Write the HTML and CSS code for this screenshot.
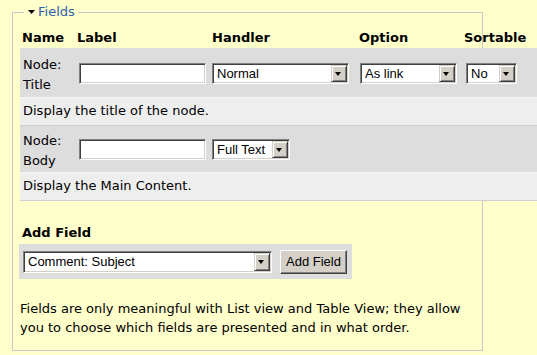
FILE: index.html
```html
<!DOCTYPE html>
<html lang="en">
<head>
<meta charset="utf-8">
<title>Fields</title>
<link rel="stylesheet" href="styles.css">
</head>
<body>
<fieldset class="fields">
  <legend class="legend"><svg class="caret" width="7" height="4" viewBox="0 0 7 4"><polygon points="0,0 7,0 3.5,4" fill="#000"/></svg><a href="#" class="legend-link">Fields</a></legend>
  <table class="field-table">
    <colgroup>
      <col class="c-name"><col class="c-label"><col class="c-handler"><col class="c-option"><col class="c-sort">
    </colgroup>
    <thead>
      <tr class="head">
        <th>Name</th><th>Label</th><th>Handler</th><th>Option</th><th>Sortable</th>
      </tr>
    </thead>
    <tbody>
      <tr class="field first">
        <td class="name">Node:<br>Title</td>
        <td class="ctl"><input type="text" class="text-input"></td>
        <td class="ctl"><span class="sel s-handler"><select><option>Normal</option></select><span class="btn"></span></span></td>
        <td class="ctl"><span class="sel s-option"><select><option>As link</option></select><span class="btn"></span></span></td>
        <td class="ctl"><span class="sel s-sort"><select><option>No</option></select><span class="btn"></span></span></td>
      </tr>
      <tr class="desc">
        <td colspan="5">Display the title of the node.</td>
      </tr>
      <tr class="field">
        <td class="name">Node:<br>Body</td>
        <td class="ctl"><input type="text" class="text-input"></td>
        <td class="ctl" colspan="3"><span class="sel s-full"><select><option>Full Text</option></select><span class="btn"></span></span></td>
      </tr>
      <tr class="desc">
        <td colspan="5">Display the Main Content.</td>
      </tr>
    </tbody>
  </table>

  <h3 class="add-title">Add Field</h3>
  <div class="add-box">
    <span class="sel s-comment"><select><option>Comment: Subject</option></select><span class="btn"></span></span>
    <button type="button" class="push">Add Field</button>
  </div>

  <p class="help">Fields are only meaningful with List view and Table View; they allow you to choose which fields are presented and in what order.</p>
</fieldset>
</body>
</html>
```

FILE: styles.css
```css
html { overflow: hidden; }
body {
  margin: 0;
  background: #ffffcc;
  font-family: "DejaVu Sans", Verdana, sans-serif;
  font-size: 13px;
  color: #000;
}
.fields {
  box-sizing: border-box;
  width: 471px;
  margin: 4px 0 0 12px;
  padding: 8px 7px 13px 7px;
  border: 1px solid #c8c8c8;
  min-width: 0;
}
.legend {
  margin-left: 4px;
  padding: 0 3px 0 4px;
  line-height: 16px;
  height: 16px;
}
.caret { vertical-align: 2px; margin-right: 3px; }
.legend-link { color: #2f5fae; text-decoration: none; }

.field-table {
  table-layout: fixed;
  width: 517px;
  border-collapse: separate;
  border-spacing: 0;
}
.c-name { width: 55px; }
.c-label { width: 135px; }
.c-handler { width: 147px; }
.c-option { width: 105px; }
.c-sort { width: 75px; }

.head th {
  text-align: left;
  font-weight: bold;
  padding: 0 2px;
  line-height: 20px;
  height: 20px;
  white-space: nowrap;
}
.field { background: #dddddd; }
.field td { vertical-align: top; line-height: 20px; }
.field .name { padding: 5px 2px 1px 3px; }
.field .ctl { padding: 13px 0 0 0; }
.field.first .name { padding-top: 7px; padding-bottom: 2px; }
.field.first .ctl { padding-top: 15px; }
.desc { background: #eeeeee; }
.desc td {
  padding: 3px 3px 4px;
  line-height: 20px;
  border-top: 1px solid #f6f6f6;
  border-bottom: 1px solid #cfcfcf;
}

.text-input {
  box-sizing: border-box;
  width: 127px;
  height: 21px;
  margin: 0 0 0 4px;
  padding: 0 3px;
  background: #fff;
  border-style: solid;
  border-width: 1px;
  border-color: #808080 #ffffff #ffffff #808080;
  box-shadow: inset 1px 1px 0 #404040, inset -1px -1px 0 #d4d0c8;
  font: 13px "Liberation Sans", Arial, sans-serif;
  vertical-align: top;
}

.sel {
  position: relative;
  display: inline-block;
  vertical-align: top;
  margin-left: 2px;
}
.sel select {
  appearance: none;
  -webkit-appearance: none;
  box-sizing: border-box;
  display: block;
  height: 21px;
  margin: 0;
  padding: 0 0 0 4px;
  background: #fff;
  color: #000;
  border-radius: 0;
  border-style: solid;
  border-width: 1px;
  border-color: #808080 #ffffff #ffffff #808080;
  box-shadow: inset 1px 1px 0 #404040, inset -1px -1px 0 #d4d0c8;
  font: 13px "Liberation Sans", Arial, sans-serif;
  outline: none;
}
.sel .btn {
  position: absolute;
  right: 2px;
  top: 2px;
  bottom: 2px;
  width: 16px;
  box-sizing: border-box;
  background: #d4d0c8;
  border-style: solid;
  border-width: 1px;
  border-color: #d4d0c8 #404040 #404040 #d4d0c8;
  box-shadow: inset 1px 1px 0 #ffffff, inset -1px -1px 0 #808080;
  pointer-events: none;
}
.sel .btn::after {
  content: "";
  position: absolute;
  left: 3px;
  top: 6px;
  width: 0;
  height: 0;
  border-top: 4px solid #000;
  border-left: 3.5px solid transparent;
  border-right: 3.5px solid transparent;
}
.s-handler select { width: 137px; }
.s-option { margin-left: 3px; }
.s-option select { width: 97px; }
.s-sort { margin-left: 4px; }
.s-sort select { width: 51px; }
.s-full select { width: 78px; }
.s-comment { margin-left: 0; }
.s-comment select { width: 249px; height: 22px; }

.add-title {
  margin: 22px 0 0 0;
  padding-left: 2px;
  font-size: 13px;
  font-weight: bold;
  line-height: 20px;
}
.add-box {
  display: flex;
  align-items: center;
  gap: 8px;
  box-sizing: border-box;
  width: 333px;
  height: 35px;
  margin: 1px 0 0 -1px;
  padding: 0 5px 0 4px;
  background: #dddddd;
}
.push {
  box-sizing: border-box;
  width: 67px;
  height: 24px;
  margin: 0;
  padding: 0;
  background: #d4d0c8;
  border-style: solid;
  border-width: 1px;
  border-color: #ffffff #404040 #404040 #ffffff;
  box-shadow: inset -1px -1px 0 #808080;
  border-radius: 0;
  font: 13px "Liberation Sans", Arial, sans-serif;
  color: #000;
}
.help {
  margin: 20px 0 0 0;
  line-height: 19px;
}
```
